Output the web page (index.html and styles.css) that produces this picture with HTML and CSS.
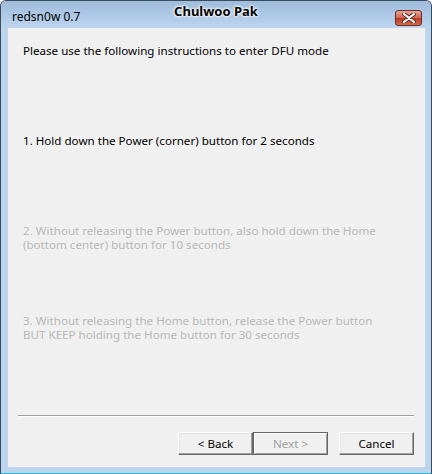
FILE: index.html
```html
<!DOCTYPE html>
<html>
<head>
	<meta charset="utf-8">
	<link rel="stylesheet" href="styles.css">
</head>
<body>
	<div class="window">
		<div class="titlebar">
			<span class="apptitle">redsn0w 0.7</span>
			<span class="author">Chulwoo Pak</span>
			<div class="closebtn">
				<svg width="14" height="10" viewBox="0 0 14 10">
					<path d="M2 1 L12 9 M12 1 L2 9" stroke="#5a2a22" stroke-width="4" stroke-linecap="round"/>
					<path d="M2 1 L12 9 M12 1 L2 9" stroke="#ffffff" stroke-width="2.2" stroke-linecap="round"/>
				</svg>
			</div>
		</div>
		<div class="content">
			<p class="intro">Please use the following instructions to enter DFU mode</p>
			<p class="step one">1. Hold down the Power (corner) button for 2 seconds</p>
			<p class="step two dim">2. Without releasing the Power button, also hold down the Home<br>(bottom center) button for 10 seconds</p>
			<p class="step three dim">3. Without releasing the Home button, release the Power button<br>BUT KEEP holding the Home button for 30 seconds</p>
			<div class="spacer"></div>
			<div class="separator"></div>
			<div class="buttons">
				<div class="btn">&lt; Back</div>
				<div class="btn disabled">Next &gt;</div>
				<div class="btn cancel">Cancel</div>
			</div>
		</div>
	</div>
</body>
</html>
```
FILE: styles.css
```css
body {
	margin: 0px;
	font-family: "Noto Sans", "DejaVu Sans", sans-serif;
	font-size: 11.6px;
}
.window {
	width: 430px;
	height: 472px;
	border: 1px solid #3c4a5a;
	border-bottom: 1px solid #2ab8d8;
	border-radius: 6px 6px 0 0;
	background: #bcd4ec;
	display: flex;
	flex-direction: column;
	overflow: hidden;
}
.titlebar {
	height: 27px;
	position: relative;
	background: linear-gradient(#9fbcdc, #bcd4ee);
	display: flex;
}
.apptitle {
	color: #000000;
	font-size: 12px;
	padding-left: 11px;
	padding-top: 7px;
}
.author {
	position: absolute;
	left: 0;
	right: 0;
	top: 1px;
	text-align: center;
	font-weight: bold;
	font-size: 13px;
	color: #000000;
	text-shadow: 0 0 3px #ffffff, 0 0 3px #ffffff, 0 0 2px #ffffff;
}
.closebtn {
	position: absolute;
	right: 9px;
	top: 9px;
	width: 27px;
	height: 16px;
	box-sizing: border-box;
	border: 1px solid #6b2d26;
	border-radius: 3px;
	background: linear-gradient(#e8a596, #d0624c 50%, #b83a22 51%, #d46a4c);
	display: flex;
	align-items: center;
	justify-content: center;
}
.content {
	flex: 1;
	margin: 0 6px 6px 7px;
	background: #f0f0f0;
	display: flex;
	flex-direction: column;
	padding: 0 11px 12px 15px;
}
p {
	margin: 0px;
	line-height: 14px;
}
.intro {
	margin-top: 16px;
}
.one {
	margin-top: 76px;
}
.two {
	margin-top: 76px;
}
.three {
	margin-top: 62px;
}
.dim {
	color: #b8b8b8;
}
.spacer {
	flex: 1;
}
.separator {
	margin-left: -5px;
	border-top: 1px solid #a0a0a0;
	border-bottom: 1px solid #ffffff;
}
.buttons {
	display: flex;
	justify-content: flex-end;
	margin-top: 15px;
}
.btn {
	width: 75px;
	height: 23px;
	box-sizing: border-box;
	border: 1px solid;
	border-color: #ffffff #696969 #696969 #ffffff;
	box-shadow: inset -1px -1px 0 #a0a0a0, inset 1px 1px 0 #e3e3e3;
	background: #f0f0f0;
	text-align: center;
	line-height: 21px;
}
.disabled {
	color: #a0a0a0;
	border: 1px solid #646464;
	box-shadow: inset 1px 1px 0 #ffffff, inset -1px -1px 0 #a0a0a0;
}
.cancel {
	margin-left: 11px;
}
```
